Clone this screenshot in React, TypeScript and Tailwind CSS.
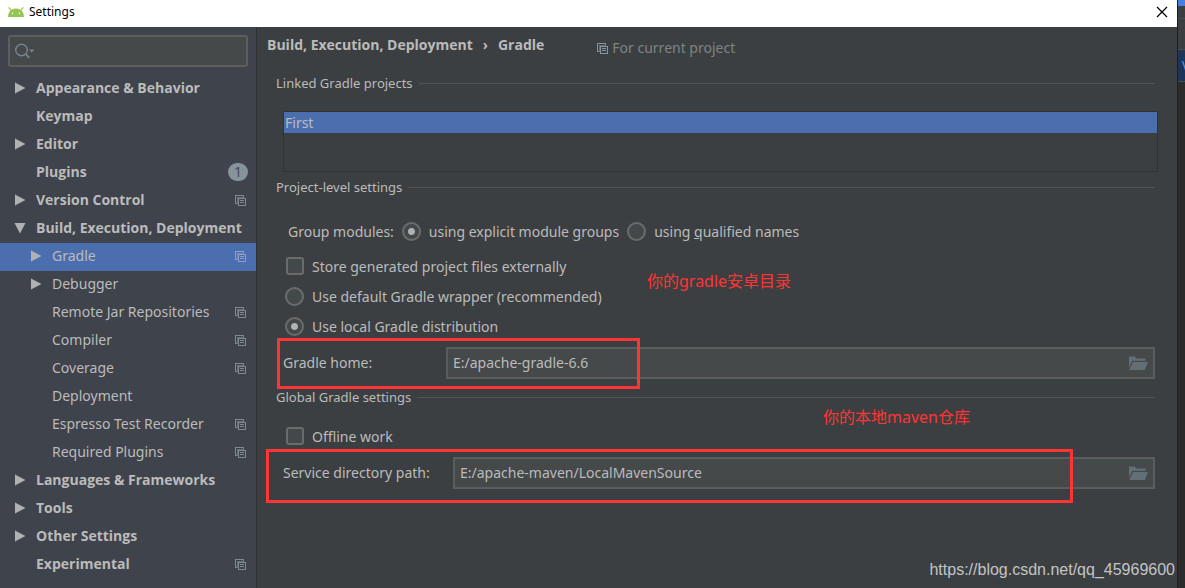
import { useState } from "react";
import type { ReactNode } from "react";
import clsx from "clsx";

type TreeItem = {
  label: string;
  level?: 0 | 1;
  arrow?: "right" | "down";
  project?: boolean;
  badge?: number;
};

const treeItems: TreeItem[] = [
  { label: "Appearance & Behavior", arrow: "right" },
  { label: "Keymap" },
  { label: "Editor", arrow: "right" },
  { label: "Plugins", badge: 1 },
  { label: "Version Control", arrow: "right", project: true },
  { label: "Build, Execution, Deployment", arrow: "down" },
  { label: "Gradle", level: 1, arrow: "right", project: true },
  { label: "Debugger", level: 1, arrow: "right" },
  { label: "Remote Jar Repositories", level: 1, project: true },
  { label: "Compiler", level: 1, project: true },
  { label: "Coverage", level: 1, project: true },
  { label: "Deployment", level: 1 },
  { label: "Espresso Test Recorder", level: 1, project: true },
  { label: "Required Plugins", level: 1, project: true },
  { label: "Languages & Frameworks", arrow: "right" },
  { label: "Tools", arrow: "right" },
  { label: "Other Settings", arrow: "right" },
  { label: "Experimental", project: true },
];

function AndroidIcon() {
  return (
    <svg width="16" height="10" viewBox="0 0 16 10" aria-hidden="true">
      <path d="M0 10C0.2 5.2 2.6 1.6 8 1.6s7.8 3.6 8 8.4z" fill="#97c554" />
      <path d="M0.6 0.4l3 3.2M15.4 0.4l-3 3.2" stroke="#97c554" strokeWidth="1.2" />
      <circle cx="4.5" cy="6.2" r="0.8" fill="#fff" />
      <circle cx="11.5" cy="6.2" r="0.8" fill="#fff" />
    </svg>
  );
}

function ProjectIcon() {
  return (
    <svg
      width="11"
      height="11"
      viewBox="0 0 11 11"
      fill="none"
      stroke="currentColor"
      shapeRendering="crispEdges"
      className="shrink-0"
      aria-hidden="true"
    >
      <path d="M2 8.5H0.5V0.5H8.5V2" />
      <path d="M2.5 9V2.5H9" opacity="0.6" />
      <path d="M3.5 3.5h7v7h-7z" />
      <path d="M5 5.5h4M5 7.5h4" />
    </svg>
  );
}

function FolderIcon() {
  return (
    <svg width="20" height="15" viewBox="0 0 20 15" fill="#636f77" aria-hidden="true">
      <path d="M1 0.5h6l1 2h9.5v2.3H4.2L1 11.5z" />
      <path d="M5 6h15l-3.2 8H1.2z" />
    </svg>
  );
}

function Arrow({ dir }: { dir?: "right" | "down" }) {
  return (
    <svg width="12" height="12" viewBox="0 0 12 12" fill="#afb1b3" className="shrink-0" aria-hidden="true">
      {dir === "right" && <path d="M1 0.5L11.5 6 1 11.5z" />}
      {dir === "down" && <path d="M0.5 1h11L6 11.5z" />}
    </svg>
  );
}

function SectionTitle({ children, className }: { children: ReactNode; className?: string }) {
  return (
    <h2 className={clsx("flex items-center gap-1.5 pl-[19px] text-[13px] leading-5", className)}>
      {children}
      <span className="h-px flex-1 bg-[#515456]" />
    </h2>
  );
}

type ChoiceProps = {
  type: "radio" | "checkbox";
  name?: string;
  checked: boolean;
  onChange: () => void;
  children: ReactNode;
};

function Choice({ type, name, checked, onChange, children }: ChoiceProps) {
  return (
    <label className="flex h-[30px] items-center gap-2">
      <span className="flex w-[19px] justify-center pb-0.5">
        <input
          type={type}
          name={name}
          checked={checked}
          onChange={onChange}
          className={clsx(
            "shrink-0 appearance-none border-2 border-[#6b6b6b] bg-[#43494a]",
            type === "radio"
              ? "size-[19px] rounded-full checked:bg-[radial-gradient(circle,#afb1b3_3px,#43494a_4px)]"
              : "size-[18px] rounded-[3px] checked:bg-[#afb1b3]"
          )}
        />
      </span>
      <span>{children}</span>
    </label>
  );
}

function PathField({ id, value, onChange }: { id: string; value: string; onChange: (v: string) => void }) {
  return (
    <div className="flex h-8 flex-1 items-center border-2 border-[#5a5c5d] bg-[#45494a] pr-[5px] pl-[5px]">
      <input
        id={id}
        value={value}
        onChange={(e) => onChange(e.target.value)}
        className="min-w-0 flex-1 bg-transparent outline-none"
      />
      <button type="button" aria-label="Browse">
        <FolderIcon />
      </button>
    </div>
  );
}

function Sidebar() {
  const [query, setQuery] = useState("");
  const [selected, setSelected] = useState("Gradle");

  return (
    <aside className="w-[257px] shrink-0 border-r border-[#323232] bg-[#3f434c]">
      <label className="mx-2 mt-2 mb-2 flex h-8 items-center rounded-[3px] border-2 border-[#5c5f60] bg-[#45494a] pl-1">
        <svg width="22" height="18" viewBox="0 0 22 18" fill="none" stroke="#758592" aria-hidden="true">
          <circle cx="7.5" cy="8" r="5.8" strokeWidth="1.4" />
          <path d="M11.7 12.2l3.6 3.6" strokeWidth="1.8" />
          <path d="M15 7.5h5.5l-2.7 3z" fill="#758592" stroke="none" />
        </svg>
        <input
          aria-label="Search settings"
          value={query}
          onChange={(e) => setQuery(e.target.value)}
          className="min-w-0 flex-1 bg-transparent outline-none"
        />
      </label>
      <ul>
        {treeItems.map((item) => {
          const active = item.label === selected;
          return (
            <li key={item.label}>
              <button
                type="button"
                onClick={() => setSelected(item.label)}
                className={clsx(
                  "flex h-7 w-full items-center gap-2.5 pr-2 pb-0.5 text-left text-sm whitespace-nowrap",
                  item.level ? "pl-[30px]" : "pl-3.5 font-['Open_Sans',sans-serif] font-bold",
                  active && "bg-[#4b6eaf]"
                )}
              >
                <Arrow dir={item.arrow} />
                <span className="flex-1">{item.label}</span>
                {item.badge && (
                  <span className="flex h-[18px] w-5 items-center justify-center rounded-full bg-[#87939a] font-normal text-[#3f434c]">
                    {item.badge}
                  </span>
                )}
                {item.project && (
                  <span className={clsx("flex pt-px pr-0.5", active ? "text-[#8ba0c4]" : "text-[#7f8b91]")}>
                    <ProjectIcon />
                  </span>
                )}
              </button>
            </li>
          );
        })}
      </ul>
    </aside>
  );
}

function GradlePanel() {
  const [modules, setModules] = useState("explicit");
  const [distribution, setDistribution] = useState("local");
  const [external, setExternal] = useState(false);
  const [offline, setOffline] = useState(false);
  const [home, setHome] = useState("E:/apache-gradle-6.6");
  const [service, setService] = useState("E:/apache-maven/LocalMavenSource");

  return (
    <main className="relative min-w-0 flex-1 bg-[#3c3f41] pr-[22px] text-sm whitespace-nowrap">
      <div className="flex h-9 items-center pl-2.5">
        <h1 className="flex gap-2.5 font-['Open_Sans',sans-serif] font-bold">
          <span>Build, Execution, Deployment</span>
          <span>›</span>
          <span>Gradle</span>
        </h1>
        <p className="mt-1.5 ml-[53px] flex items-center gap-1 text-[#808284]">
          <span className="text-[#87939a]">
            <ProjectIcon />
          </span>
          For current project
        </p>
      </div>

      <SectionTitle className="mt-2.5">Linked Gradle projects</SectionTitle>
      <ul className="mt-[18px] -mr-[3px] ml-[26px] h-[61px] border border-[#323232]">
        <li className="bg-[#4b6eaf] pl-px leading-[21px]">First</li>
      </ul>

      <SectionTitle className="mt-[5px]">Project-level settings</SectionTitle>
      <div className="mt-5 flex items-center gap-2 pl-[31px]">
        <span>Group modules:</span>
        <Choice type="radio" name="modules" checked={modules === "explicit"} onChange={() => setModules("explicit")}>
          using explicit module <u>g</u>roups
        </Choice>
        <Choice type="radio" name="modules" checked={modules === "qualified"} onChange={() => setModules("qualified")}>
          using <u>q</u>ualified names
        </Choice>
      </div>
      <div className="mt-[5px] pl-7">
        <Choice type="checkbox" checked={external} onChange={() => setExternal(!external)}>
          Store generated project files externally
        </Choice>
        <Choice
          type="radio"
          name="distribution"
          checked={distribution === "wrapper"}
          onChange={() => setDistribution("wrapper")}
        >
          Use default Gradle wrapper (recommended)
        </Choice>
        <Choice
          type="radio"
          name="distribution"
          checked={distribution === "local"}
          onChange={() => setDistribution("local")}
        >
          Use local Gradle distribution
        </Choice>
      </div>
      <div className="relative mt-[5px] flex items-center pl-[26px]">
        <label htmlFor="gradle-home" className="w-[163px]">
          Gradle home:
        </label>
        <PathField id="gradle-home" value={home} onChange={setHome} />
        <span className="pointer-events-none absolute -top-[9px] left-5 h-[51px] w-[363px] border-3 border-[#ff3434]" />
        <p className="absolute -top-[78px] left-[390px] text-base text-[#ff3434]">你的gradle安卓目录</p>
      </div>

      <SectionTitle className="mt-2">Global Gradle settings</SectionTitle>
      <div className="mt-[15px] pl-7">
        <Choice type="checkbox" checked={offline} onChange={() => setOffline(!offline)}>
          Offline work
        </Choice>
      </div>
      <div className="relative mt-[5px] flex items-center pl-[26px]">
        <label htmlFor="service-path" className="w-[170px]">
          Service directory path:
        </label>
        <PathField id="service-path" value={service} onChange={setService} />
        <span className="pointer-events-none absolute -top-2 left-[9px] h-[54px] w-[807px] border-3 border-[#ff3434]" />
        <p className="absolute -top-[52px] left-[566px] text-base text-[#ff3434]">你的本地maven仓库</p>
      </div>

      <p className="absolute right-0.5 bottom-1.5 font-['Liberation_Sans',sans-serif] text-base text-[#c3c4c5]">
        https://blog.csdn.net/qq_45969600
      </p>
    </main>
  );
}

export default function App() {
  return (
    <div className="flex min-h-screen bg-[#2b2b2b] font-['Noto_Sans','Noto_Sans_CJK_SC',sans-serif] text-[#bbbbbb]">
      <div className="flex min-w-0 flex-1 flex-col">
        <header className="flex h-[27px] items-center bg-white pr-[7px] pb-1 pl-2 text-black">
          <AndroidIcon />
          <span className="ml-[5px] flex-1 text-xs">Settings</span>
          <button type="button" aria-label="Close" className="flex size-4 items-center justify-center">
            <svg width="12" height="12" viewBox="0 0 12 12" stroke="#000" strokeWidth="1.2" aria-hidden="true">
              <path d="M1 1l10 10M11 1L1 11" />
            </svg>
          </button>
        </header>
        <div className="flex flex-1">
          <Sidebar />
          <GradlePanel />
        </div>
      </div>

      {/* edge of the window behind the dialog */}
      <div className="w-2 shrink-0 overflow-hidden border-l border-[#1e1e1e]">
        <div className="h-1.5 bg-[#4a7de0]" />
        <div className="h-[13px] border-b border-[#4b4d4e] bg-[#3c3f41]" />
        <div className="h-[31px] border-b border-[#4b4d4e] bg-[#3c3f41]" />
        <div className="flex h-8 items-center border-b border-[#4b4d4e] bg-[#1d3557] pl-1 text-xs text-[#589df6]">V</div>
      </div>
    </div>
  );
}
